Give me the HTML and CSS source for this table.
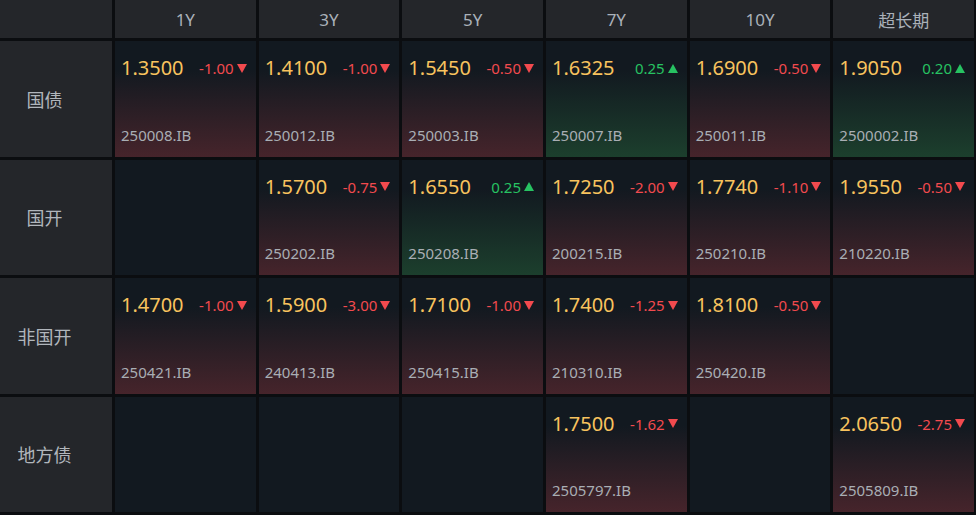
FILE: index.html
```html
<!DOCTYPE html>
<html lang="zh-CN">

<head>
    <meta charset="UTF-8" />
    <title>收益率矩阵</title>
    <link rel="stylesheet" href="styles.css">
</head>

<body>
    <div class="board">
        <div class="head corner"></div>
        <div class="head">1Y</div>
        <div class="head">3Y</div>
        <div class="head">5Y</div>
        <div class="head">7Y</div>
        <div class="head">10Y</div>
        <div class="head">超长期</div>

        <!-- 国债 -->
        <div class="label">国债</div>
        <div class="cell down">
            <div class="top"><span class="price">1.3500</span><span class="chg">-1.00</span></div>
            <div class="code">250008.IB</div>
        </div>
        <div class="cell down">
            <div class="top"><span class="price">1.4100</span><span class="chg">-1.00</span></div>
            <div class="code">250012.IB</div>
        </div>
        <div class="cell down">
            <div class="top"><span class="price">1.5450</span><span class="chg">-0.50</span></div>
            <div class="code">250003.IB</div>
        </div>
        <div class="cell up">
            <div class="top"><span class="price">1.6325</span><span class="chg">0.25</span></div>
            <div class="code">250007.IB</div>
        </div>
        <div class="cell down">
            <div class="top"><span class="price">1.6900</span><span class="chg">-0.50</span></div>
            <div class="code">250011.IB</div>
        </div>
        <div class="cell up">
            <div class="top"><span class="price">1.9050</span><span class="chg">0.20</span></div>
            <div class="code">2500002.IB</div>
        </div>

        <!-- 国开 -->
        <div class="label">国开</div>
        <div class="cell empty"></div>
        <div class="cell down">
            <div class="top"><span class="price">1.5700</span><span class="chg">-0.75</span></div>
            <div class="code">250202.IB</div>
        </div>
        <div class="cell up">
            <div class="top"><span class="price">1.6550</span><span class="chg">0.25</span></div>
            <div class="code">250208.IB</div>
        </div>
        <div class="cell down">
            <div class="top"><span class="price">1.7250</span><span class="chg">-2.00</span></div>
            <div class="code">200215.IB</div>
        </div>
        <div class="cell down">
            <div class="top"><span class="price">1.7740</span><span class="chg">-1.10</span></div>
            <div class="code">250210.IB</div>
        </div>
        <div class="cell down">
            <div class="top"><span class="price">1.9550</span><span class="chg">-0.50</span></div>
            <div class="code">210220.IB</div>
        </div>

        <!-- 非国开 -->
        <div class="label">非国开</div>
        <div class="cell down">
            <div class="top"><span class="price">1.4700</span><span class="chg">-1.00</span></div>
            <div class="code">250421.IB</div>
        </div>
        <div class="cell down">
            <div class="top"><span class="price">1.5900</span><span class="chg">-3.00</span></div>
            <div class="code">240413.IB</div>
        </div>
        <div class="cell down">
            <div class="top"><span class="price">1.7100</span><span class="chg">-1.00</span></div>
            <div class="code">250415.IB</div>
        </div>
        <div class="cell down">
            <div class="top"><span class="price">1.7400</span><span class="chg">-1.25</span></div>
            <div class="code">210310.IB</div>
        </div>
        <div class="cell down">
            <div class="top"><span class="price">1.8100</span><span class="chg">-0.50</span></div>
            <div class="code">250420.IB</div>
        </div>
        <div class="cell empty"></div>

        <!-- 地方债 -->
        <div class="label">地方债</div>
        <div class="cell empty"></div>
        <div class="cell empty"></div>
        <div class="cell empty"></div>
        <div class="cell down">
            <div class="top"><span class="price">1.7500</span><span class="chg">-1.62</span></div>
            <div class="code">2505797.IB</div>
        </div>
        <div class="cell empty"></div>
        <div class="cell down">
            <div class="top"><span class="price">2.0650</span><span class="chg">-2.75</span></div>
            <div class="code">2505809.IB</div>
        </div>
    </div>
</body>

</html>
```

FILE: styles.css
```css
:root {
    --line: #0b0d10;
    --head: #24262a;
    --cell: #121920;
    --red-bg: #46242b;
    --green-bg: #1c3f2d;
    --red: #f24a4e;
    --green: #27c262;
    --price: #f8c35e;
    --grey: #a9aeb4;
}

* {
    margin: 0;
    padding: 0;
    box-sizing: border-box;
}

html,
body {
    background: var(--line);
    font-family: "Noto Sans", "Noto Sans CJK SC", sans-serif;
    color: var(--grey);
}

body {
    width: 976px;
    height: 515px;
    overflow: hidden;
    padding: 0 2px 3px 0;
}

.board {
    display: grid;
    grid-template-columns: 112px repeat(6, 1fr);
    grid-template-rows: 38px repeat(4, 1fr);
    gap: 3px;
    height: 100%;
}

.head {
    background: var(--head);
    display: flex;
    align-items: center;
    justify-content: center;
    font-size: 17px;
    color: #aab1b9;
}

.label {
    background: var(--head);
    display: flex;
    align-items: center;
    justify-content: center;
    padding-right: 23px;
    font-size: 18px;
    color: #b1b6bc;
}

.cell {
    background: var(--cell);
    display: flex;
    flex-direction: column;
    justify-content: space-between;
    padding: 14px 9px 13px 6px;
}

.cell.down {
    background: linear-gradient(180deg, var(--cell) 25%, var(--red-bg));
}

.cell.up {
    background: linear-gradient(180deg, var(--cell) 25%, var(--green-bg));
}

.top {
    display: flex;
    align-items: center;
    justify-content: space-between;
}

.price {
    font-size: 20px;
    color: var(--price);
    line-height: 26px;
}

.chg {
    font-size: 15px;
    display: flex;
    align-items: center;
    gap: 3px;
}

.chg::after {
    content: "";
    display: inline-block;
    border-left: 5px solid transparent;
    border-right: 5px solid transparent;
}

.down .chg {
    color: var(--red);
}

.down .chg::after {
    border-top: 9px solid var(--red);
}

.up .chg {
    color: var(--green);
}

.up .chg::after {
    border-bottom: 9px solid var(--green);
}

.code {
    font-size: 15px;
    line-height: 18px;
    color: var(--grey);
}
```
